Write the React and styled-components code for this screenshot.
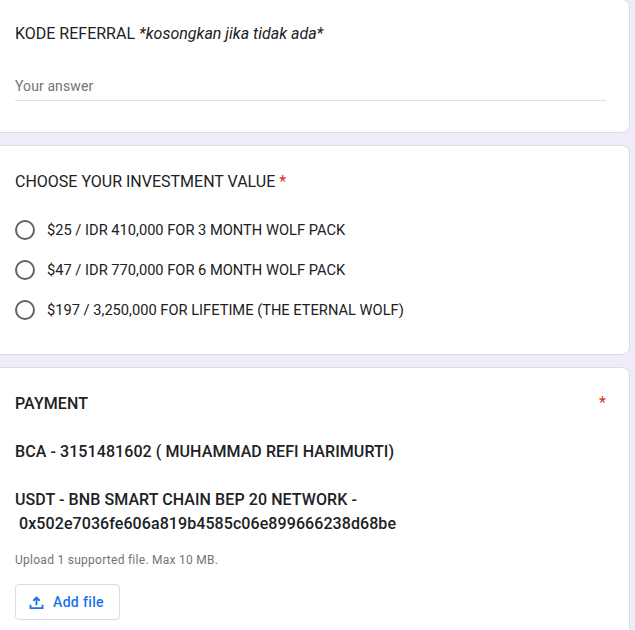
import styled, { createGlobalStyle } from "styled-components";

const GlobalStyle = createGlobalStyle`
  html, body {
    margin: 0;
    height: 630px;
    overflow: hidden;
    background: #f0ebf8;
    font-family: Roboto, "Liberation Sans", sans-serif;
    color: #202124;
  }
`;

const options = [
  "$25 / IDR 410,000 FOR 3 MONTH WOLF PACK",
  "$47 / IDR 770,000 FOR 6 MONTH WOLF PACK",
  "$197 / 3,250,000 FOR LIFETIME (THE ETERNAL WOLF)",
];

const App = () => {
  return (
    <Page>
      <GlobalStyle />
      <Card height="134px" pad="22px">
        <Question>
          KODE REFERRAL <em>*kosongkan jika tidak ada*</em>
        </Question>
        <AnswerLine>Your answer</AnswerLine>
      </Card>

      <Card height="210px" pad="24px">
        <Question>
          CHOOSE YOUR INVESTMENT VALUE <Required>*</Required>
        </Question>
        <Options>
          {options.map((o) => (
            <Option key={o}>
              <Radio />
              <span>{o}</span>
            </Option>
          ))}
        </Options>
      </Card>

      <Card pad="24px">
        <PaymentHead>
          <span>PAYMENT</span>
          <PaymentStar>*</PaymentStar>
        </PaymentHead>
        <PaymentText>BCA - 3151481602 ( MUHAMMAD REFI HARIMURTI)</PaymentText>
        <PaymentText>
          USDT - BNB SMART CHAIN BEP 20 NETWORK -
          <br />
          &nbsp;0x502e7036fe606a819b4585c06e899666238d68be
        </PaymentText>
        <Hint>Upload 1 supported file. Max 10 MB.</Hint>
        <AddFile>
          <svg width="17" height="17" viewBox="0 0 24 24" fill="none" stroke="#1a73e8" strokeWidth="2.6">
            <path d="M12 16V5M7.5 9.5 12 5l4.5 4.5M3.5 15v5h17v-5" />
          </svg>
          Add file
        </AddFile>
      </Card>
    </Page>
  );
};

export default App;

const Page = styled.div`
  display: flex;
  flex-direction: column;
  gap: 12px;
  width: 640px;
  margin: -1px 0 0 -10px;
`;

const Card = styled.div`
  box-sizing: border-box;
  height: ${(props) => props.height || "auto"};
  padding: ${(props) => props.pad} 24px 30px;
  background: #fff;
  border: 1px solid #dadce0;
  border-radius: 8px;
`;

const Question = styled.div`
  font-size: 16px;
  line-height: 24px;
`;

const Required = styled.span`
  color: #d93025;
`;

const PaymentStar = styled(Required)`
  margin-top: -1px;
  font-weight: 400;
`;

const AnswerLine = styled.div`
  width: 591px;
  margin-top: 28px;
  height: 24px;
  padding-bottom: 2px;
  font-size: 14px;
  line-height: 24px;
  letter-spacing: 0.1px;
  color: #70757a;
  border-bottom: 1px solid #e0e0e0;
`;

const Options = styled.div`
  display: flex;
  flex-direction: column;
  gap: 20px;
  margin-top: 26px;
`;

const Option = styled.div`
  display: flex;
  align-items: center;
  gap: 12px;
  height: 20px;
  font-size: 14.67px;
`;

const Radio = styled.div`
  box-sizing: border-box;
  width: 20px;
  height: 20px;
  border: 2px solid #5f6368;
  border-radius: 50%;
`;

const PaymentHead = styled.div`
  display: flex;
  justify-content: space-between;
  width: 591px;
  font-size: 16px;
  font-weight: 500;
  line-height: 24px;
  letter-spacing: 0.08px;
`;

const PaymentText = styled.div`
  margin-top: 24px;
  font-size: 16px;
  font-weight: 500;
  line-height: 24px;
  letter-spacing: 0.08px;
`;

const Hint = styled.div`
  margin-top: 15px;
  font-size: 12px;
  line-height: 18px;
  letter-spacing: 0.27px;
  color: #70757a;
`;

const AddFile = styled.button`
  display: flex;
  align-items: center;
  gap: 8px;
  box-sizing: border-box;
  height: 36px;
  width: 105px;
  margin-top: 15px;
  padding: 0 0 0 12px;
  background: #fff;
  border: 1px solid #dadce0;
  border-radius: 4px;
  font-family: inherit;
  font-size: 14px;
  font-weight: 500;
  letter-spacing: 0.35px;
  color: #1a73e8;
`;
